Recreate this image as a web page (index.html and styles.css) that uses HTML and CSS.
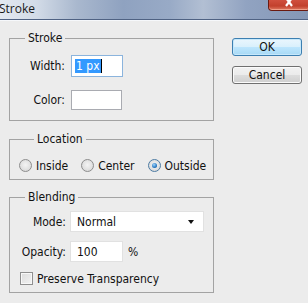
FILE: index.html
```html
<!DOCTYPE html>
<html>
<head>
<meta charset="utf-8">
<link rel="stylesheet" href="styles.css">
</head>
<body>
<div class="titlebar">
  <span class="title">Stroke</span>
  <span class="close"><svg class="x" width="12" height="8" viewBox="0 0 12 8"><path d="M2 -2 L8 6 M8 -2 L2 6" stroke="#fff" stroke-width="2.2" fill="none"/></svg></span>
</div>
<div class="dialog">
  <div class="left">
    <fieldset class="group g-stroke">
      <legend>Stroke</legend>
      <div class="row r-width">
        <span class="lbl">Width:</span>
        <span class="field f-width"><span class="sel">1 px</span><span class="caret"></span></span>
      </div>
      <div class="row r-color">
        <span class="lbl">Color:</span>
        <span class="field f-color"></span>
      </div>
    </fieldset>
    <fieldset class="group g-loc">
      <legend>Location</legend>
      <div class="radios">
        <span class="opt"><span class="radio"></span><span>Inside</span></span>
        <span class="opt"><span class="radio"></span><span>Center</span></span>
        <span class="opt"><span class="radio on"></span><span>Outside</span></span>
      </div>
    </fieldset>
    <fieldset class="group g-blend">
      <legend>Blending</legend>
      <div class="row r-mode">
        <span class="lbl lbl2">Mode:</span>
        <span class="field f-select"><span>Normal</span><span class="arrow"></span></span>
      </div>
      <div class="row r-opacity">
        <span class="lbl lbl2">Opacity:</span>
        <span class="field f-opacity">100</span>
        <span class="pct">%</span>
      </div>
      <div class="check">
        <span class="box"></span><span>Preserve Transparency</span>
      </div>
    </fieldset>
  </div>
  <div class="right">
    <button class="btn ok">OK</button>
    <button class="btn cancel">Cancel</button>
  </div>
</div>
</body>
</html>
```

FILE: styles.css
```css
html, body {
  margin: 0;
  padding: 0;
}
body {
  width: 308px;
  height: 303px;
  overflow: hidden;
  background: #ececec;
  font-family: "DejaVu Sans Condensed", "DejaVu Sans", sans-serif;
  font-stretch: condensed;
  font-size: 12px;
  color: #111;
}
.titlebar {
  height: 19px;
  border-bottom: 1px solid #4f6283;
  box-shadow: 0 1px 0 #f6f8fb;
  display: flex;
  align-items: flex-start;
  background: linear-gradient(90deg, #e3e9f1 0%, #d2dbe7 12%, #a9b8ce 25%, #8fa2c0 40%, #98aac6 55%, #b2bfd3 66%, #91a3c1 80%, #8497b6 100%);
}
.title {
  font-family: "Open Sans", sans-serif;
  font-stretch: normal;
  font-size: 12px;
  line-height: 17px;
  color: #1a1a1a;
  margin-left: -1px;
}
.close {
  margin-left: auto;
  margin-right: -2px;
  width: 40px;
  height: 10px;
  border: 1px solid #6a1a10;
  border-top: none;
  border-radius: 0 0 4px 4px;
  background: linear-gradient(#d0503e, #c2412d 60%, #e07a62);
  box-shadow: inset 0 -1px 0 #f0a08a;
  display: flex;
  justify-content: center;
  overflow: hidden;
}
.x {
  display: block;
  margin-left: 2px;
}
.dialog {
  display: flex;
  align-items: flex-start;
  margin-top: 1px;
}
.left {
  margin-left: 9px;
  width: 205px;
  margin-top: 10px;
}
.group {
  margin: 0;
  padding: 0;
  border: 1px solid #a3a3a3;
  min-width: 0;
}
.group + .group {
  margin-top: 11px;
}
.g-blend {
  margin-top: 10px !important;
}
legend {
  padding: 0 3px;
  margin-left: 15px;
  line-height: 14px;
}
.row {
  display: flex;
  align-items: center;
}
.lbl {
  width: 55px;
  text-align: right;
  margin-right: 6px;
}
.lbl2 {
  width: 56px;
  margin-right: 4px;
}
.field {
  background: #fff;
  box-sizing: border-box;
  display: flex;
  align-items: center;
}
.g-stroke {
  padding: 10px 0 10px 0;
}
.f-width {
  width: 52px;
  height: 22px;
  border: 1px solid #8bb4dd;
  padding-left: 3px;
}
.sel {
  background: #3399ff;
  color: #fff;
  line-height: 14px;
  padding: 0 1px;
}
.caret {
  width: 1px;
  height: 14px;
  background: #000;
}
.r-color {
  margin-top: 13px;
}
.f-color {
  width: 51px;
  height: 20px;
  border: 1px solid #a9abb1;
}
.g-loc {
  padding: 13px 0 7px 9px;
}
.radios {
  display: flex;
  align-items: center;
  gap: 13px;
  height: 13px;
}
.opt {
  display: flex;
  align-items: center;
  gap: 4px;
}
.radio {
  width: 11px;
  height: 11px;
  border: 1px solid #8d8d8d;
  border-radius: 50%;
  background: radial-gradient(circle at 50% 45%, #f4f4f4 0%, #e2e2e2 55%, #cfcfcf 100%);
  box-sizing: content-box;
  display: inline-flex;
  align-items: center;
  justify-content: center;
}
.radio.on {
  border-color: #4d7ba3;
}
.radio.on::after {
  content: "";
  width: 5px;
  height: 5px;
  border-radius: 50%;
  background: radial-gradient(circle at 40% 35%, #9fd6ff, #1a6bb6 70%, #0d4d8a);
}
.g-blend {
  padding: 7px 0 7px 0;
}
.f-select {
  width: 134px;
  height: 21px;
  border: 1px solid #e1e1e1;
  padding-left: 6px;
  padding-right: 9px;
  justify-content: space-between;
}
.arrow {
  width: 0;
  height: 0;
  border-left: 3.5px solid transparent;
  border-right: 3.5px solid transparent;
  border-top: 4px solid #111;
}
.r-opacity {
  margin-top: 9px;
}
.f-opacity {
  width: 53px;
  height: 21px;
  border: 1px solid #e1e1e1;
  padding-left: 6px;
}
.pct {
  margin-left: 5px;
}
.check {
  margin-top: 10px;
  margin-left: 10px;
  display: flex;
  align-items: center;
  gap: 4px;
  height: 13px;
}
.box {
  width: 11px;
  height: 11px;
  border: 1px solid #8f8f8f;
  background: linear-gradient(135deg, #dcdcdc, #f3f3f3);
  box-shadow: inset 0 0 0 1px #f8f8f8;
}
.right {
  margin-left: 18px;
  margin-top: 17px;
  display: flex;
  flex-direction: column;
  gap: 10px;
}
.btn {
  width: 70px;
  height: 18px;
  margin: 0;
  padding: 0;
  font: inherit;
  color: #111;
  border-radius: 3px;
  line-height: 14px;
}
.ok {
  border: 1px solid #3c7fb1;
  background: linear-gradient(#eaf6fd, #d9f0fc 50%, #bee6fd 50%, #a7d9f5);
  box-shadow: inset 0 0 0 1px #c6e8fb;
}
.cancel {
  border: 1px solid #707070;
  background: linear-gradient(#f2f2f2, #ebebeb 50%, #dddddd 50%, #cfcfcf);
  box-shadow: inset 0 0 0 1px #fbfbfb;
}
```
